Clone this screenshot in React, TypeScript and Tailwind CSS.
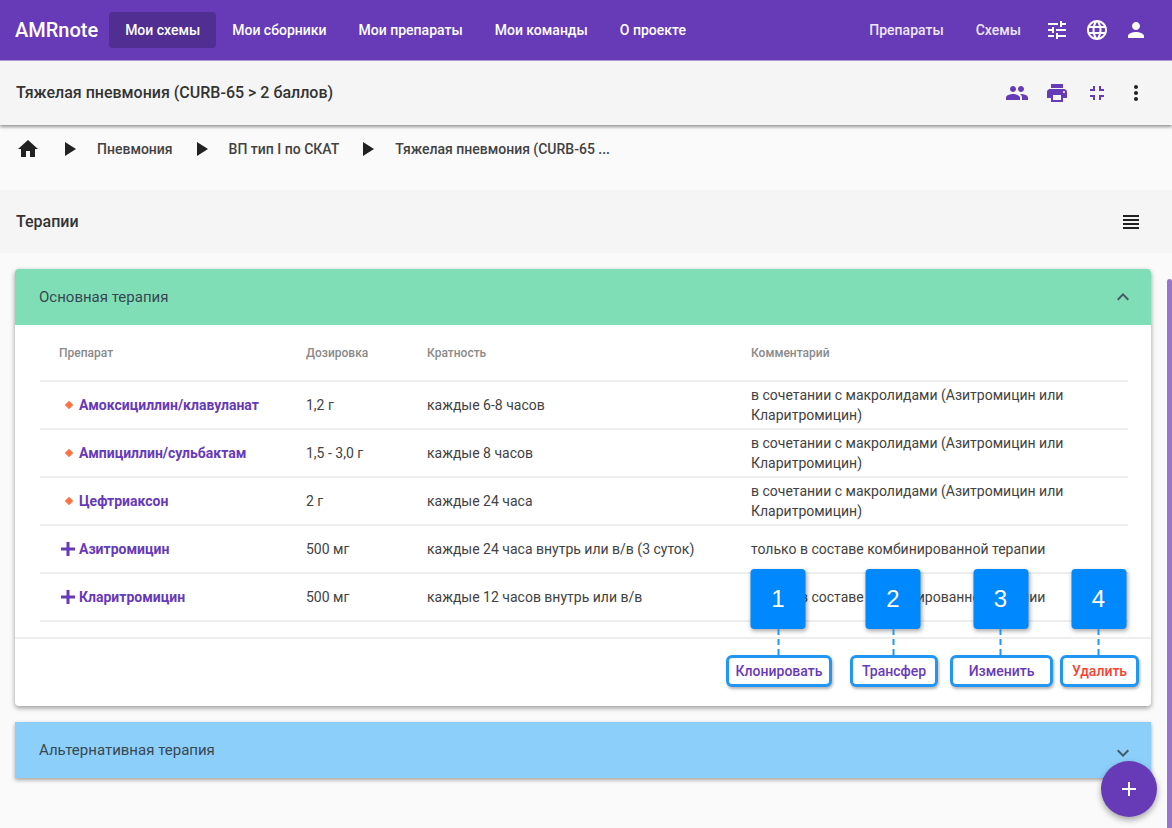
import {
    MdAdd,
    MdExpandLess,
    MdExpandMore,
    MdFullscreenExit,
    MdHome,
    MdLanguage,
    MdMoreVert,
    MdPeople,
    MdPerson,
    MdPlayArrow,
    MdPrint,
    MdTune,
    MdViewHeadline,
} from "react-icons/md";

const comment = "в сочетании с макролидами (Азитромицин или Кларитромицин)";
const onlyCombo = "только в составе комбинированной терапии";

const rows = [
    { name: "Амоксициллин/клавуланат", dose: "1,2 г", freq: "каждые 6-8 часов", note: comment, plus: false },
    { name: "Ампициллин/сульбактам", dose: "1,5 - 3,0 г", freq: "каждые 8 часов", note: comment, plus: false },
    { name: "Цефтриаксон", dose: "2 г", freq: "каждые 24 часа", note: comment, plus: false },
    { name: "Азитромицин", dose: "500 мг", freq: "каждые 24 часа внутрь или в/в (3 суток)", note: onlyCombo, plus: true },
    { name: "Кларитромицин", dose: "500 мг", freq: "каждые 12 часов внутрь или в/в", note: onlyCombo, plus: true },
];

const actions = [
    { label: "Клонировать", n: 1, box: "w-[106px]", color: "text-[#673ab7]" },
    { label: "Трансфер", n: 2, box: "w-[88px] ml-[18px]", color: "text-[#673ab7]" },
    { label: "Изменить", n: 3, box: "w-[103px] ml-[12px]", color: "text-[#673ab7]" },
    { label: "Удалить", n: 4, box: "w-[79px] ml-[7px]", color: "text-[#f44336]" },
];

const Crumb = ({ label }: { label: string }) => (
    <>
        <MdPlayArrow className="size-6 text-[#212121] ml-[9px] mr-[16px] shrink-0" />
        <span className="text-[14px] font-medium text-[#424242] mr-[7px] whitespace-nowrap">{label}</span>
    </>
);

export default function App() {
    return (
        <div className="relative w-[1172px] h-[828px] overflow-hidden bg-[#fafafa] font-['Roboto',sans-serif]">
            {/* top nav */}
            <header className="h-[61px] bg-[#673ab7] border-b border-[#b39ddb] flex items-center pl-[15px] pr-[24px] text-white">
                <span className="text-[20px] font-medium mr-[11px]">AMRnote</span>
                <nav className="flex items-center text-[14px] font-medium">
                    <a className="h-[36px] w-[107px] flex items-center justify-center rounded bg-[#512e91]">Мои схемы</a>
                    <a className="ml-[16px]">Мои сборники</a>
                    <a className="ml-[32px]">Мои препараты</a>
                    <a className="ml-[32px]">Мои команды</a>
                    <a className="ml-[32px]">О проекте</a>
                </nav>
                <div className="ml-auto flex items-center text-[14px] font-medium">
                    <a className="text-[#ede7f6]">Препараты</a>
                    <a className="ml-[32px] text-[#ede7f6]">Схемы</a>
                    <MdTune className="size-6 ml-[24px]" />
                    <MdLanguage className="size-6 ml-[16px]" />
                    <MdPerson className="size-6 ml-[15px]" />
                </div>
            </header>

            {/* title bar */}
            <div className="relative h-[64px] bg-[#f5f5f5] flex items-center pl-[16px] pr-[24px] shadow-[0_2px_3px_rgba(0,0,0,0.4)]">
                <h1 className="text-[16px] font-medium text-[#333]">Тяжелая пневмония (CURB-65 &gt; 2 баллов)</h1>
                <div className="ml-auto flex items-center">
                    <MdPeople className="size-6 text-[#673ab7]" />
                    <MdPrint className="size-6 ml-[16px] text-[#673ab7]" />
                    <MdFullscreenExit className="size-6 ml-[16px] text-[#673ab7]" />
                    <MdMoreVert className="size-6 ml-[15px] text-[#212121]" />
                </div>
            </div>

            {/* breadcrumbs */}
            <div className="h-[65px] pt-[12px] pl-[16px] flex items-start">
                <div className="flex items-center h-[24px]">
                    <MdHome className="size-6 text-[#212121] mr-[8px]" />
                    <Crumb label="Пневмония" />
                    <Crumb label="ВП тип I по СКАТ" />
                    <Crumb label="Тяжелая пневмония (CURB-65 ..." />
                </div>
            </div>

            {/* section header */}
            <div className="h-[63px] bg-[#f5f5f5] flex items-center pl-[16px] pr-[29px]">
                <h2 className="text-[16px] font-medium text-[#333]">Терапии</h2>
                <MdViewHeadline className="size-6 ml-auto text-[#212121]" />
            </div>

            <div className="pl-[15px] pr-[21px] pt-[16px]">
                {/* main therapy card */}
                <section className="bg-white rounded shadow-[0_2px_5px_rgba(0,0,0,0.4)]">
                    <div className="h-[56px] bg-[#80deb7] rounded-t flex items-center pl-[24px] pr-[16px]">
                        <span className="text-[15px] text-[#37474f]">Основная терапия</span>
                        <MdExpandLess className="size-6 ml-auto text-[#455a64]" />
                    </div>

                    <div className="pl-[25px] pr-[23px]">
                        <div className="h-[57px] grid grid-cols-[266px_121px_324px_377px] items-center border-b-2 border-[#eeeeee] text-[12px] font-medium text-[#8a8a8a]">
                            <span className="pl-[19px]">Препарат</span>
                            <span>Дозировка</span>
                            <span>Кратность</span>
                            <span>Комментарий</span>
                        </div>
                        {rows.map((row) => (
                            <div
                                key={row.name}
                                className="h-[48px] grid grid-cols-[266px_121px_324px_377px] items-center border-b-2 border-[#eeeeee] text-[14px] text-[#424242]"
                            >
                                <div className="flex items-center pl-[21px]">
                                    <span className="w-[18px] flex justify-start">
                                        {row.plus ? (
                                            <svg viewBox="0 0 14 14" className="size-[14px] fill-[#673ab7]">
                                                <path d="M5.5 0h3v5.5H14v3H8.5V14h-3V8.5H0v-3h5.5z" />
                                            </svg>
                                        ) : (
                                            <span className="size-[6px] ml-[5px] rotate-45 bg-[#ff7043]" />
                                        )}
                                    </span>
                                    <a className="font-bold text-[#673ab7] whitespace-nowrap">{row.name}</a>
                                </div>
                                <span>{row.dose}</span>
                                <span>{row.freq}</span>
                                <span className="leading-[20px] pr-[40px]">{row.note}</span>
                            </div>
                        ))}
                    </div>

                    {/* footer with numbered callouts */}
                    <div className="mt-[15px] h-[69px] border-t-2 border-[#eeeeee] flex items-start justify-end pt-[16px] pr-[12px]">
                        {actions.map((action) => (
                            <div key={action.n} className={`relative h-[32px] ${action.box}`}>
                                <button className={`w-full h-full rounded-md border-[3px] border-[#2196f3] bg-white shadow-[1px_2px_3px_rgba(0,0,0,0.3)] text-[14px] font-medium ${action.color}`}>
                                    {action.label}
                                </button>
                                <div className="absolute bottom-full left-1/2 -ml-[1px] -translate-x-1/2 flex flex-col items-center">
                                    <div className="w-[55px] h-[60px] rounded bg-[#0088ff] text-white text-[24px] font-['Liberation_Sans',sans-serif] flex items-center justify-center shadow-[1px_2px_4px_rgba(0,0,0,0.35)]">
                                        {action.n}
                                    </div>
                                    <div className="h-[26px] border-l-2 border-dashed border-[#2196f3]" />
                                </div>
                            </div>
                        ))}
                    </div>
                </section>

                {/* alternative therapy card */}
                <section className="mt-[16px] h-[56px] bg-[#8dcffb] flex items-center pl-[24px] pr-[16px] shadow-[0_2px_4px_rgba(0,0,0,0.35)]">
                    <span className="text-[15px] text-[#37474f]">Альтернативная терапия</span>
                    <MdExpandMore className="size-6 ml-auto translate-y-[3px] text-[#455a64]" />
                </section>
            </div>

            {/* scrollbar thumb */}
            <div className="absolute right-0 top-[279px] bottom-0 w-[5px] rounded-t bg-[#9575cd]" />

            {/* fab */}
            <button className="absolute left-[1101px] top-[761px] size-[56px] rounded-full bg-[#673ab7] text-white flex items-center justify-center shadow-[0_3px_6px_rgba(0,0,0,0.35)]">
                <MdAdd className="size-6" />
            </button>
        </div>
    );
}
